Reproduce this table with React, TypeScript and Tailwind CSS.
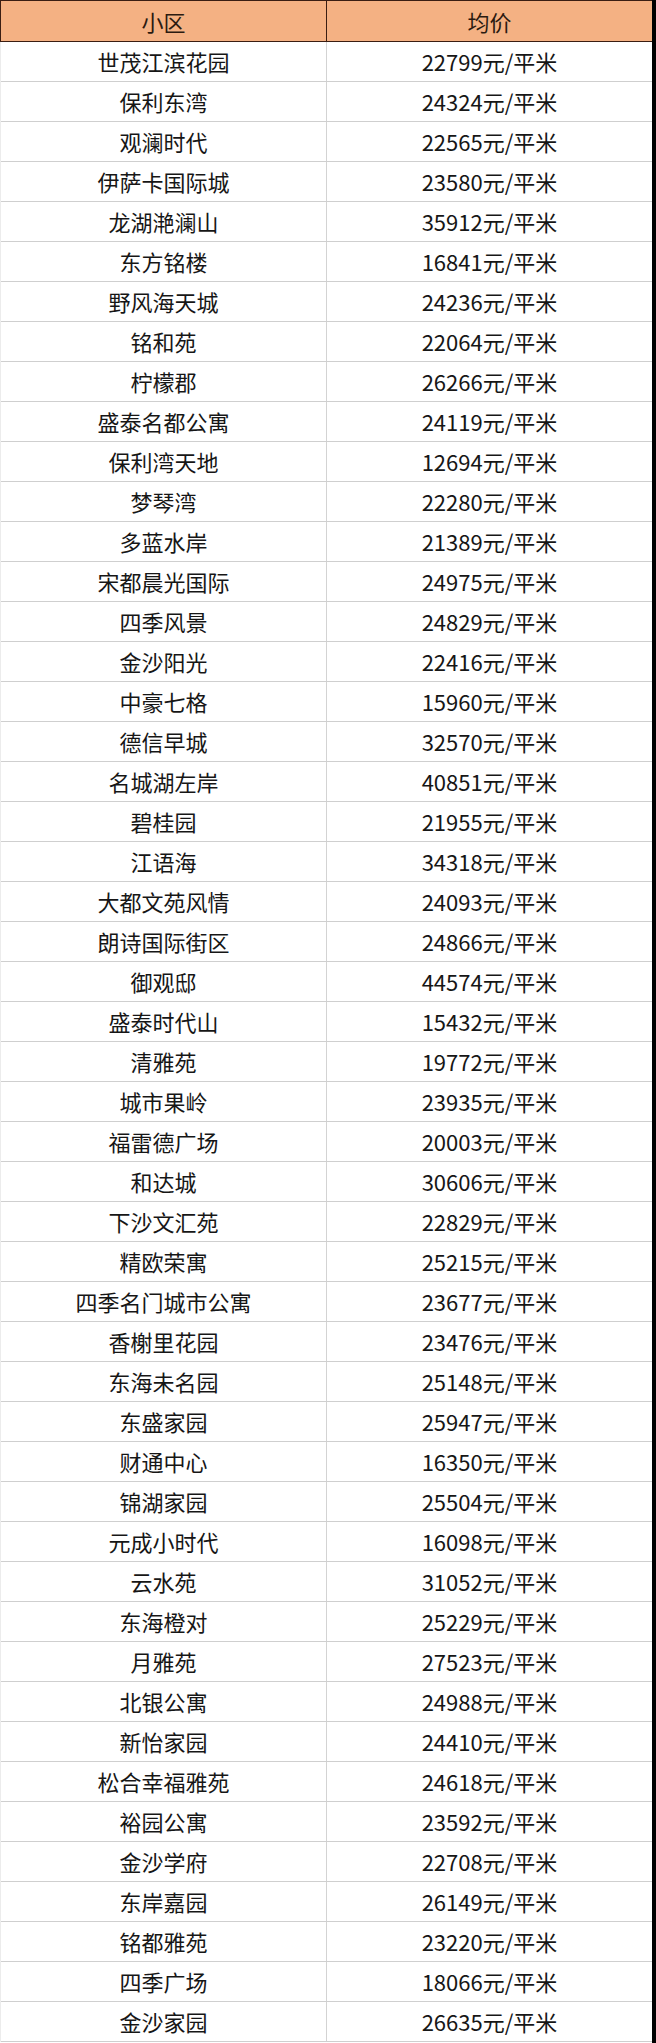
const rows: [string, string][] = [
  ["世茂江滨花园", "22799"],
  ["保利东湾", "24324"],
  ["观澜时代", "22565"],
  ["伊萨卡国际城", "23580"],
  ["龙湖滟澜山", "35912"],
  ["东方铭楼", "16841"],
  ["野风海天城", "24236"],
  ["铭和苑", "22064"],
  ["柠檬郡", "26266"],
  ["盛泰名都公寓", "24119"],
  ["保利湾天地", "12694"],
  ["梦琴湾", "22280"],
  ["多蓝水岸", "21389"],
  ["宋都晨光国际", "24975"],
  ["四季风景", "24829"],
  ["金沙阳光", "22416"],
  ["中豪七格", "15960"],
  ["德信早城", "32570"],
  ["名城湖左岸", "40851"],
  ["碧桂园", "21955"],
  ["江语海", "34318"],
  ["大都文苑风情", "24093"],
  ["朗诗国际街区", "24866"],
  ["御观邸", "44574"],
  ["盛泰时代山", "15432"],
  ["清雅苑", "19772"],
  ["城市果岭", "23935"],
  ["福雷德广场", "20003"],
  ["和达城", "30606"],
  ["下沙文汇苑", "22829"],
  ["精欧荣寓", "25215"],
  ["四季名门城市公寓", "23677"],
  ["香榭里花园", "23476"],
  ["东海未名园", "25148"],
  ["东盛家园", "25947"],
  ["财通中心", "16350"],
  ["锦湖家园", "25504"],
  ["元成小时代", "16098"],
  ["云水苑", "31052"],
  ["东海橙对", "25229"],
  ["月雅苑", "27523"],
  ["北银公寓", "24988"],
  ["新怡家园", "24410"],
  ["松合幸福雅苑", "24618"],
  ["裕园公寓", "23592"],
  ["金沙学府", "22708"],
  ["东岸嘉园", "26149"],
  ["铭都雅苑", "23220"],
  ["四季广场", "18066"],
  ["金沙家园", "26635"],
];

export default function App() {
  return (
    <div
      className="w-[656px] h-[2043px] bg-black flex"
      style={{ fontFamily: '"Noto Sans CJK SC", "Noto Sans", sans-serif' }}
    >
      <div className="w-[652px] h-full bg-white flex flex-col">
        {/* 表头 */}
        <div className="h-[42px] grid grid-cols-[326px_1fr] bg-[#f4b183] border-t border-l border-b border-[#3a1d12] text-[22px] text-[#2b1a10]">
          <div className="flex items-center justify-center border-r border-[#3a1d12]">小区</div>
          <div className="flex items-center justify-center">均价</div>
        </div>

        {/* 数据行 */}
        <div className="flex flex-col border-l border-[#ececec]">
          {rows.map(([name, price]) => (
            <div
              key={name}
              className="h-[40px] grid grid-cols-[326px_1fr] border-b border-[#cfcfcf] text-[22px] text-[#161616]"
            >
              <div className="flex items-center justify-center border-r border-[#d3d3d3]">{name}</div>
              <div className="flex items-center justify-center">{price}元/平米</div>
            </div>
          ))}
        </div>
      </div>
    </div>
  );
}
